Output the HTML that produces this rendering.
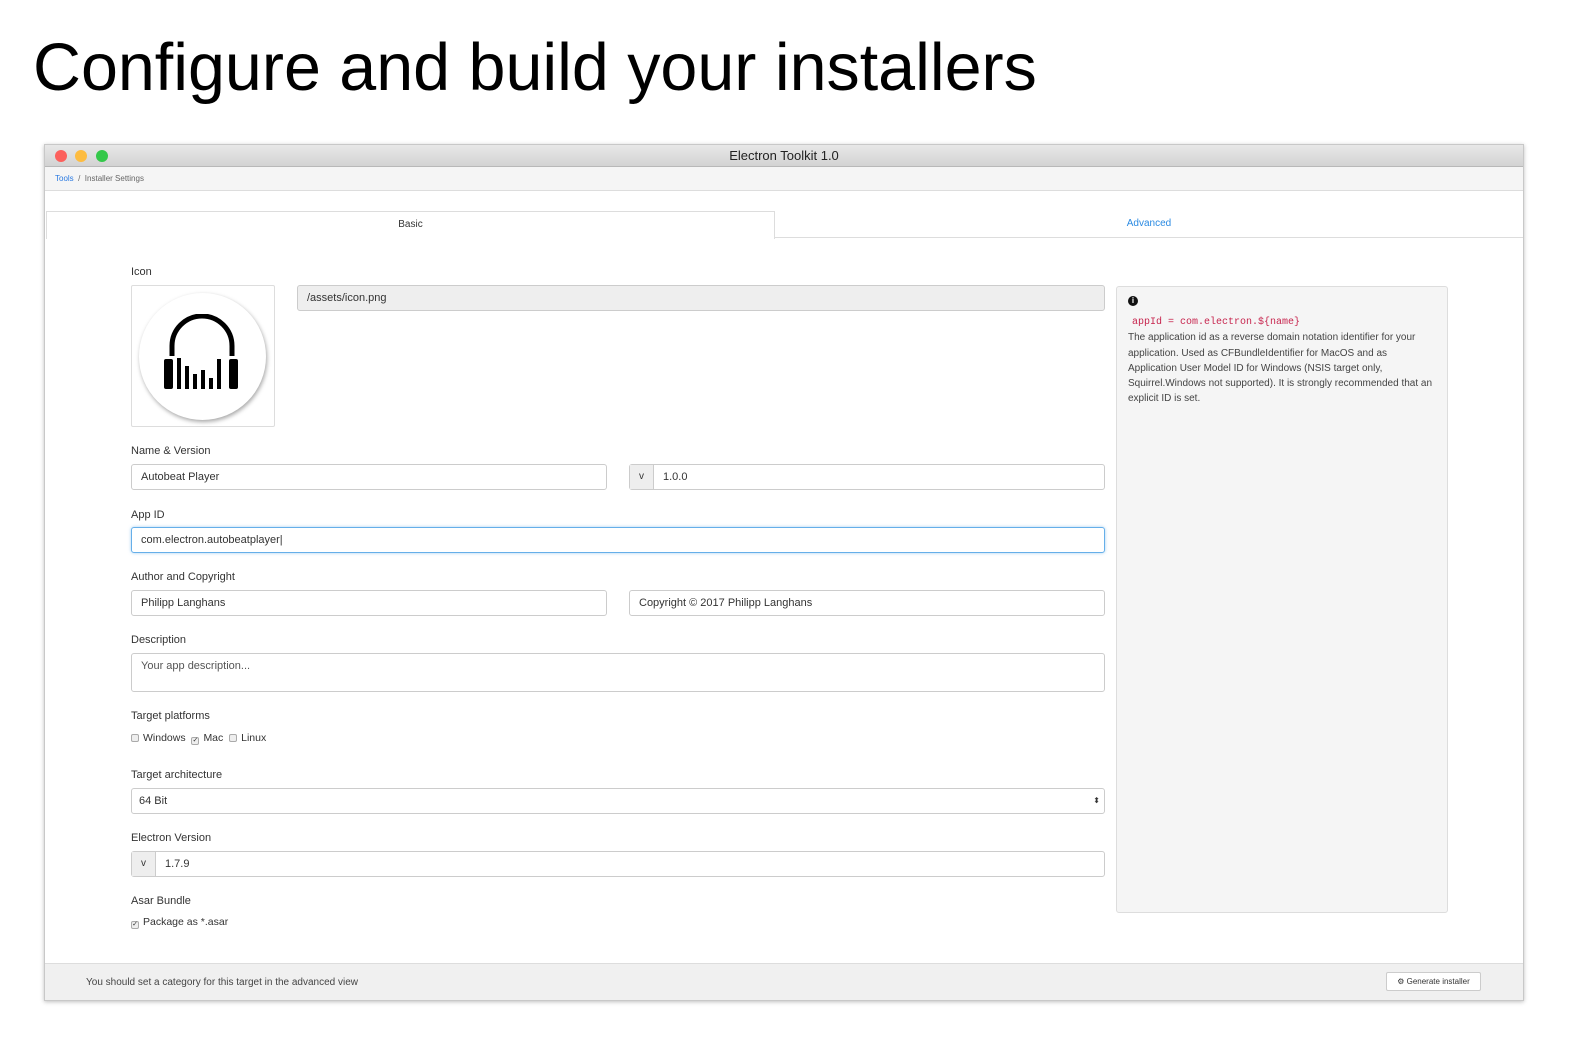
<!DOCTYPE html>
<html><head><meta charset="utf-8"><style>
*{box-sizing:border-box;margin:0;padding:0}
body{width:1569px;height:1044px;background:#fff;font-family:"Liberation Sans",sans-serif;position:relative;overflow:hidden;color:#333}
.abs{position:absolute}
h1{position:absolute;left:33px;top:30px;font-size:66.4px;font-weight:400;color:#000;white-space:nowrap}
.win{left:44px;top:144px;width:1480px;height:857px;border:1px solid #c8c8c8;background:#fff;box-shadow:0 1px 4px rgba(0,0,0,.25)}
.lbl{position:absolute;font-size:11px;color:#333}
.inp{position:absolute;border:1px solid #ccc;border-radius:3px;background:#fff;font-size:11px;color:#333;padding-left:9px;line-height:24px}
.add{position:absolute;background:#eee;border-right:1px solid #ccc;top:0;left:0;bottom:0;width:24px;text-align:center;font-size:10px;line-height:24px}
.cb{display:inline-block;width:8px;height:8px;border:1px solid #aaa;border-radius:2px;background:#eee;vertical-align:-1px;margin-right:4px;font-size:7px;line-height:6px;text-align:center}
</style></head><body>
<h1>Configure and build your installers</h1>
<div class="abs win">
 <div class="abs" style="left:0;top:0;right:0;height:22px;background:linear-gradient(#e8e8e8,#d3d3d3);border-bottom:1px solid #b8b8b8;text-align:center;font-size:13px;line-height:22px;color:#222">Electron Toolkit 1.0</div>
 <div class="abs" style="left:10px;top:5px;width:12px;height:12px;border-radius:50%;background:#fc605c"></div>
 <div class="abs" style="left:30px;top:5px;width:12px;height:12px;border-radius:50%;background:#fdbc40"></div>
 <div class="abs" style="left:51px;top:5px;width:12px;height:12px;border-radius:50%;background:#34c84a"></div>
 <div class="abs" style="left:0;top:22px;right:0;height:24px;background:#f5f5f5;border-bottom:1px solid #ddd;font-size:8px;line-height:24px;padding-left:10px;color:#666"><span style="color:#2a7ae2">Tools</span> &nbsp;/&nbsp; Installer Settings</div>
 <div class="abs" style="left:1px;top:66px;width:729px;height:28px;border:1px solid #ddd;border-bottom:none;background:#fff;text-align:center;font-size:10px;line-height:26px">Basic</div>
 <div class="abs" style="left:730px;top:92px;right:0;height:1px;background:#ddd"></div>
 <div class="abs" style="left:730px;top:66px;width:748px;text-align:center;font-size:10px;line-height:26px;color:#2a8ae2">Advanced</div>
</div>
<div class="lbl" style="left:131px;top:266px">Icon</div>
<div class="abs" style="left:131px;top:285px;width:144px;height:142px;border:1px solid #ddd;border-radius:2px">
 <div class="abs" style="left:7px;top:7px;width:127px;height:127px;border-radius:50%;background:#fff;box-shadow:1px 2px 4px rgba(0,0,0,.35)"></div>
 <svg class="abs" style="left:30px;top:28px" width="80" height="80" viewBox="0 0 80 80">
  <path d="M10 42 V32 A30 30 0 0 1 70 32 V42" fill="none" stroke="#000" stroke-width="5"/>
  <rect x="2" y="45" width="9" height="30" rx="2"/><rect x="67" y="45" width="9" height="30" rx="2"/>
  <rect x="15" y="44" width="4" height="31"/><rect x="23" y="52" width="4" height="23"/><rect x="31" y="60" width="4" height="15"/><rect x="39" y="56" width="4" height="19"/><rect x="47" y="64" width="4" height="11"/><rect x="55" y="45" width="4" height="30"/>
 </svg>
</div>
<div class="inp" style="left:297px;top:285px;width:808px;height:26px;background:#eee">/assets/icon.png</div>
<div class="abs" style="left:1116px;top:286px;width:332px;height:627px;background:#f5f5f5;border:1px solid #ddd;border-radius:3px;padding:9px 11px;font-size:10px;line-height:15.3px;color:#444">
 <div style="width:10px;height:10px;border-radius:50%;background:#111;color:#fff;font-size:8px;line-height:10px;text-align:center;font-weight:bold;margin-bottom:9px">i</div>
 <div style="font-family:'Liberation Mono',monospace;color:#c7254e;padding-left:4px">appId = com.electron.${name}</div>
 The application id as a reverse domain notation identifier for your application. Used as CFBundleIdentifier for MacOS and as Application User Model ID for Windows (NSIS target only, Squirrel.Windows not supported). It is strongly recommended that an explicit ID is set.
</div>
<div class="lbl" style="left:131px;top:445px">Name &amp; Version</div>
<div class="inp" style="left:131px;top:464px;width:476px;height:26px">Autobeat Player</div>
<div class="inp" style="left:629px;top:464px;width:476px;height:26px;padding-left:33px"><div class="add">v</div>1.0.0</div>
<div class="lbl" style="left:131px;top:509px">App ID</div>
<div class="inp" style="left:131px;top:527px;width:974px;height:26px;border-color:#66afe9;box-shadow:0 0 3px rgba(102,175,233,.6)">com.electron.autobeatplayer|</div>
<div class="lbl" style="left:131px;top:571px">Author and Copyright</div>
<div class="inp" style="left:131px;top:590px;width:476px;height:26px">Philipp Langhans</div>
<div class="inp" style="left:629px;top:590px;width:476px;height:26px">Copyright © 2017 Philipp Langhans</div>
<div class="lbl" style="left:131px;top:634px">Description</div>
<div class="inp" style="left:131px;top:653px;width:974px;height:39px;color:#555;line-height:24px">Your app description...</div>
<div class="lbl" style="left:131px;top:710px">Target platforms</div>
<div class="lbl" style="left:131px;top:732px;font-size:10.5px"><span class="cb"></span>Windows &nbsp;<span class="cb">✓</span>Mac &nbsp;<span class="cb"></span>Linux</div>
<div class="lbl" style="left:131px;top:769px">Target architecture</div>
<div class="inp" style="left:131px;top:788px;width:974px;height:26px;padding-left:7px">64 Bit<span style="position:absolute;right:4px;top:0;font-size:8px">⬍</span></div>
<div class="lbl" style="left:131px;top:832px">Electron Version</div>
<div class="inp" style="left:131px;top:851px;width:974px;height:26px;padding-left:33px"><div class="add">v</div>1.7.9</div>
<div class="lbl" style="left:131px;top:895px">Asar Bundle</div>
<div class="lbl" style="left:131px;top:916px;font-size:10.5px"><span class="cb">✓</span>Package as *.asar</div>
<div class="abs" style="left:45px;top:963px;width:1478px;height:37px;background:#f0f0f0;border-top:1px solid #ddd"></div>
<div class="abs" style="left:86px;top:977px;font-size:10px;color:#444">You should set a category for this target in the advanced view</div>
<div class="abs" style="left:1386px;top:972px;width:95px;height:19px;border:1px solid #ccc;border-radius:2px;background:#fff;font-size:8px;line-height:17px;text-align:center;color:#333">⚙ Generate installer</div>
</body></html>
